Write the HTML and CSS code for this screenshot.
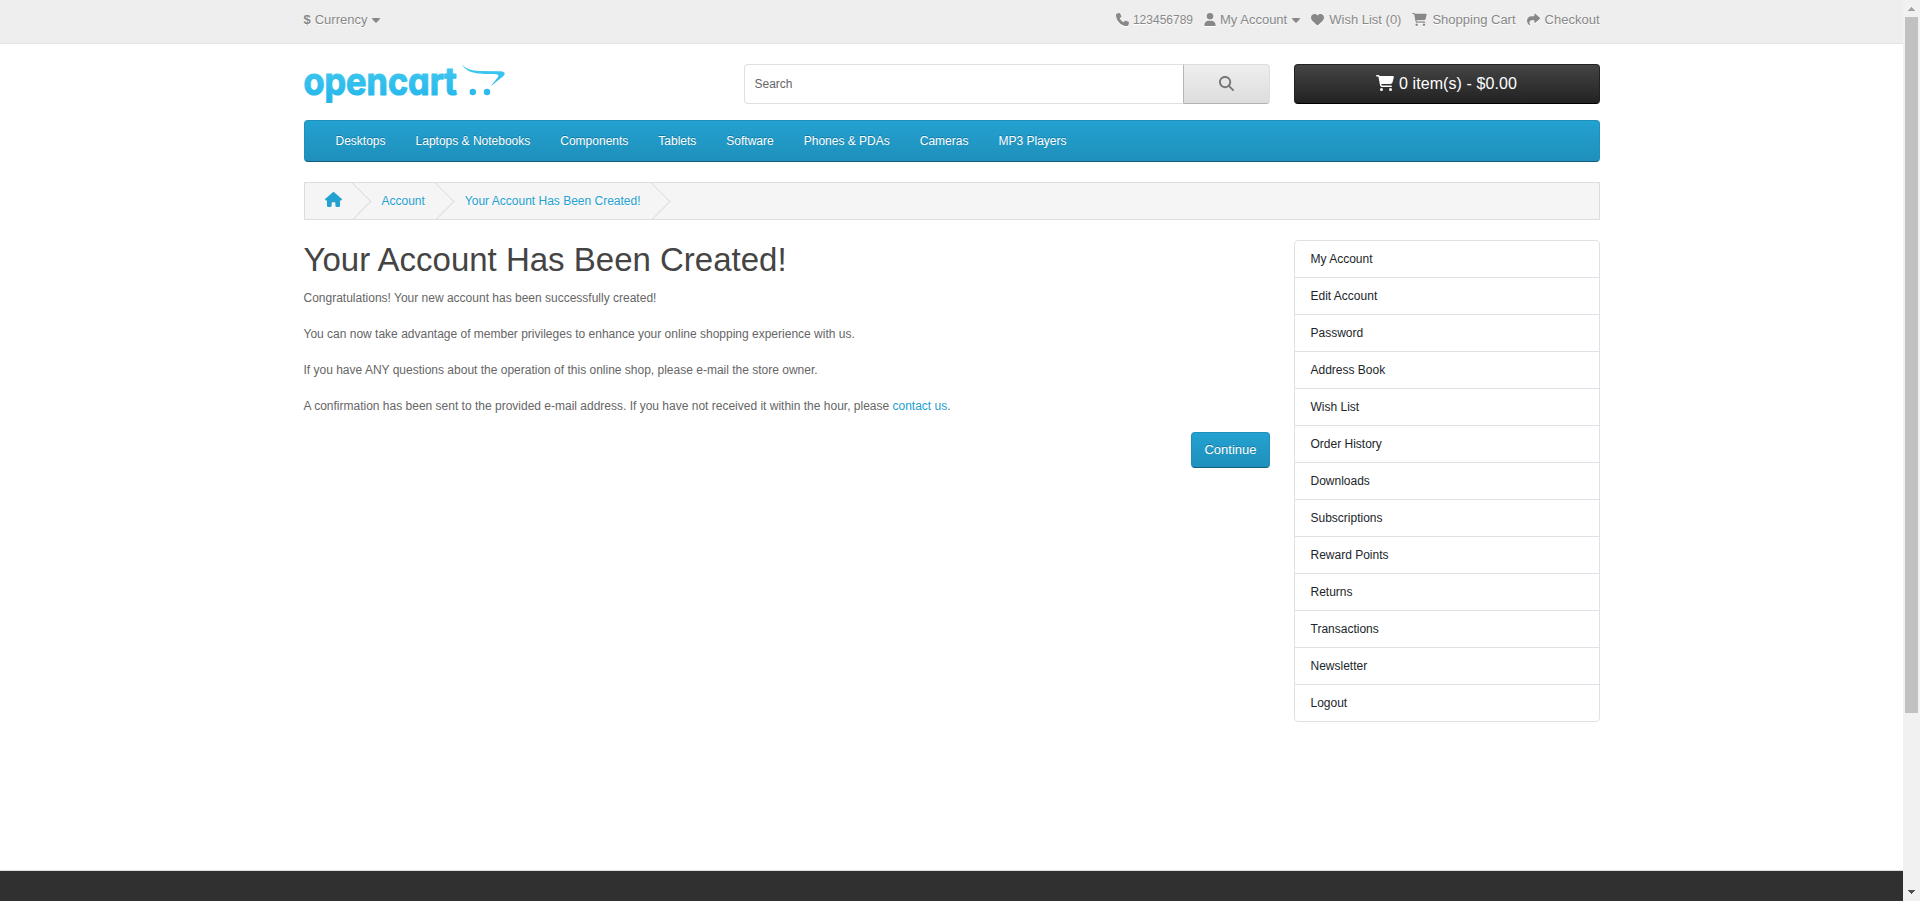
FILE: index.html
```html
<!DOCTYPE html>
<html lang="en">
<head>
<meta charset="utf-8">
<title>Your Account Has Been Created!</title>
<link rel="stylesheet" href="styles.css">
</head>
<body>
<svg class="defs" width="0" height="0">
  <symbol id="caret" viewBox="0 0 320 512"><path d="M137.4 374.6c12.5 12.5 32.8 12.5 45.3 0l128-128c9.2-9.2 11.9-22.9 6.9-34.9s-16.6-19.8-29.6-19.8L32 192c-12.9 0-24.6 7.8-29.6 19.8s-2.2 25.7 6.9 34.9l128 128z"/></symbol>
  <symbol id="cart" viewBox="0 0 576 512"><path d="M0 24C0 10.7 10.7 0 24 0H69.5c22 0 41.5 12.8 50.6 32h411c26.3 0 45.5 25 38.6 50.4l-41 152.3c-8.5 31.4-37 53.3-69.5 53.3H170.7l5.4 28.5c2.2 11.3 12.1 19.5 23.6 19.5H488c13.3 0 24 10.7 24 24s-10.7 24-24 24H199.7c-34.6 0-64.3-24.6-70.7-58.5L77.4 54.5c-.7-3.8-4-6.5-7.9-6.5H24C10.7 48 0 37.3 0 24zM128 464a48 48 0 1 1 96 0 48 48 0 1 1 -96 0zm336-48a48 48 0 1 1 0 96 48 48 0 1 1 0-96z"/></symbol>
</svg>
<div class="window">
<div class="page">
  <nav class="top">
    <div class="container top-row">
      <a class="top-item"><strong>$</strong> <span>Currency</span> <svg class="caret"><use href="#caret"/></svg></a>
      <div class="top-links">
        <a class="top-item"><svg class="icon" viewBox="0 0 512 512"><path d="M164.9 24.6c-7.7-18.6-28-28.5-47.4-23.2l-88 24C12.1 30.2 0 46 0 64C0 311.4 200.6 512 448 512c18 0 33.8-12.1 38.6-29.5l24-88c5.3-19.4-4.6-39.7-23.2-47.4l-96-40c-16.3-6.8-35.2-2.1-46.3 11.6L304.7 368C234.3 334.7 177.3 277.7 144 207.3L193.3 167c13.7-11.2 18.4-30 11.6-46.3l-40-96z"/></svg> <span class="phone">123456789</span></a>
        <a class="top-item"><svg class="icon icon-user" viewBox="0 0 448 512"><path d="M224 256A128 128 0 1 0 224 0a128 128 0 1 0 0 256zm-45.7 48C79.8 304 0 383.8 0 482.3C0 498.7 13.3 512 29.7 512H418.3c16.4 0 29.7-13.3 29.7-29.7C448 383.8 368.2 304 269.7 304H178.3z"/></svg> <span>My Account</span> <svg class="caret"><use href="#caret"/></svg></a>
        <a class="top-item wide"><svg class="icon" viewBox="0 0 512 512"><path d="M47.6 300.4L228.3 469.1c7.5 7 17.4 10.9 27.7 10.9s20.2-3.9 27.7-10.9L464.4 300.4c30.4-28.3 47.6-68 47.6-109.5v-5.8c0-69.9-50.5-129.5-119.4-141C347 36.5 300.6 51.4 268 84L256 96 244 84c-32.6-32.6-79-47.5-124.6-39.9C50.5 55.6 0 115.2 0 185.1v5.8c0 41.5 17.2 81.2 47.6 109.5z"/></svg> <span>Wish List (0)</span></a>
        <a class="top-item wide"><svg class="icon icon-cart"><use href="#cart"/></svg> <span>Shopping Cart</span></a>
        <a class="top-item wide"><svg class="icon" viewBox="0 0 512 512"><path d="M307 34.8c-11.5 5.1-19 16.6-19 29.2v64H176C78.8 128 0 206.8 0 304C0 417.3 81.5 467.9 100.2 478.1c2.5 1.4 5.3 1.9 8.1 1.9c10.9 0 19.7-8.9 19.7-19.7c0-7.5-4.3-14.4-9.8-19.5C108.8 431.9 96 414.4 96 384c0-53 43-96 96-96h96v64c0 12.6 7.4 24.1 19 29.2s25 3 34.4-5.4l160-144c6.7-6.1 10.6-14.7 10.6-23.8s-3.8-17.7-10.6-23.8l-160-144c-9.4-8.5-22.9-10.6-34.4-5.4z"/></svg> <span>Checkout</span></a>
      </div>
    </div>
  </nav>

  <header class="container header">
    <div class="logo">
      <svg class="logo-art" width="202" height="50" viewBox="0 0 202 50">
        <defs>
          <linearGradient id="sky" gradientUnits="userSpaceOnUse" x1="0" y1="2" x2="0" y2="38">
            <stop offset="0" stop-color="#41c8f0"/><stop offset="1" stop-color="#22b6ea"/>
          </linearGradient>
        </defs>
        <text class="wordmark" x="-0.6" y="30.6" textLength="153.500" lengthAdjust="spacingAndGlyphs">opencart</text>
        <path fill="url(#sky)" d="M157.800 .3C162 5 168 6.800 175 7L195 7.200C200.500 7.300 202 9 199.500 12L187 22C190 17.500 194 14 194.300 12C194.500 10.500 193 10.200 190 10.100C178 9.800 163.500 11 157.800 .3Z"/>
        <circle fill="url(#sky)" cx="168.800" cy="28" r="3.200"/><circle fill="url(#sky)" cx="183" cy="28" r="3.200"/>
      </svg>
    </div>
    <div class="search">
      <div class="search-input">Search</div>
      <div class="search-button"><svg class="icon-search" viewBox="0 0 512 512"><path d="M416 208c0 45.9-14.9 88.3-40 122.7L502.6 457.4c12.5 12.5 12.5 32.8 0 45.3s-32.8 12.5-45.3 0L330.7 376c-34.4 25.2-76.8 40-122.7 40C93.1 416 0 322.9 0 208S93.1 0 208 0S416 93.1 416 208zM208 352a144 144 0 1 0 0-288 144 144 0 1 0 0 288z"/></svg></div>
    </div>
    <div class="cart-button"><svg class="cart-icon"><use href="#cart"/></svg><span>0 item(s) - $0.00</span></div>
  </header>

  <div class="container">
    <nav class="menu">
      <a>Desktops</a><a>Laptops &amp; Notebooks</a><a>Components</a><a>Tablets</a><a>Software</a><a>Phones &amp; PDAs</a><a>Cameras</a><a>MP3 Players</a>
    </nav>
    <ul class="breadcrumb">
      <li><svg class="icon-home" viewBox="0 0 576 512"><path d="M575.8 255.5c0 18-15 32.1-32 32.1h-32l.7 160.2c0 2.700-.2 5.400-.5 8.100V472c0 22.100-17.900 40-40 40H456c-1.100 0-2.200 0-3.300-.1c-1.400 .1-2.800 .1-4.200 .1H416 392c-22.100 0-40-17.900-40-40V448 384c0-17.700-14.300-32-32-32H256c-17.700 0-32 14.300-32 32v64 24c0 22.100-17.900 40-40 40H160 128.100c-1.500 0-3-.1-4.500-.2c-1.200 .1-2.400 .2-3.600 .2H104c-22.100 0-40-17.900-40-40V360c0-.9 0-1.900 .1-2.800V287.600H32c-18 0-32-14-32-32.100c0-9 3-17 10-24L266.400 8c7-7 15-8 22-8s15 2 21 7L564.800 231.500c8 7 12 15 11 24z"/></svg></li>
      <li>Account</li>
      <li>Your Account Has Been Created!</li>
    </ul>
  </div>

  <div class="container columns">
    <main class="content">
      <h1>Your Account Has Been Created!</h1>
      <p>Congratulations! Your new account has been successfully created!</p>
      <p>You can now take advantage of member privileges to enhance your online shopping experience with us.</p>
      <p>If you have ANY questions about the operation of this online shop, please e-mail the store owner.</p>
      <p>A confirmation has been sent to the provided e-mail address. If you have not received it within the hour, please <a class="link">contact us</a>.</p>
      <div class="actions"><a class="button">Continue</a></div>
    </main>
    <aside class="side-list">
      <a>My Account</a><a>Edit Account</a><a>Password</a><a>Address Book</a><a>Wish List</a><a>Order History</a><a>Downloads</a><a>Subscriptions</a><a>Reward Points</a><a>Returns</a><a>Transactions</a><a>Newsletter</a><a>Logout</a>
    </aside>
  </div>
  <footer class="footer"></footer>
</div>
<div class="scrollbar">
  <svg width="17" height="17" shape-rendering="crispEdges"><path fill="#a3a3a3" d="M8 7h1v1h1v1h1v1h1v1H5v-1h1V9h1V8h1z"/></svg>
  <div class="thumb"></div>
  <svg class="down" width="17" height="17" shape-rendering="crispEdges"><path fill="#505050" d="M5 6h7v1h-1v1h-1v1H9v1H8V9H7V8H6V7H5z"/></svg>
</div>
</div>
</body>
</html>
```
FILE: styles.css
```css
* { box-sizing: border-box; }
body {
  margin: 0;
  font: 12px/18px "Liberation Sans", Arial, sans-serif;
  color: #666;
  background: #fff;
}
svg { fill: currentColor; flex: none; }
.defs { display: none; }
.window { display: flex; height: 901px; overflow: hidden; }
.page { flex: 1; display: flex; flex-direction: column; }
.container { width: 1320px; margin: 0 auto; padding: 0 12px; }

.top { height: 44px; background: #eee; border-bottom: 1px solid #e2e2e2; }
.top-row {
  display: flex;
  justify-content: space-between;
  padding-top: 10px;
  font-size: 13px;
  line-height: 20px;
  color: #888;
  text-shadow: 0 1px 0 #fff;
}
.top-links { display: flex; gap: 11px; }
.top-item { display: flex; align-items: center; gap: 4px; white-space: nowrap; }
.top-item.wide { gap: 5px; }
.phone { font-size: 12px; }
.icon { width: 13px; height: 13px; margin-bottom: 2px; filter: drop-shadow(0 1px 0 #fff); }
.icon-user { width: 12px; }
.icon-cart { width: 15px; }
.caret { width: 8px; height: 13px; margin: 0 0 2px 1px; }

.header { display: flex; padding-top: 20px; height: 76px; }
.logo { width: 440px; }
.logo-art { display: block; overflow: visible; }
.wordmark {
  font: 700 38px Inter, "Open Sans", sans-serif;
  font-feature-settings: "cv11", "ss03";
  fill: url(#sky);
  stroke: url(#sky);
  stroke-width: 1.2;
  stroke-linejoin: round;
}
.search { display: flex; width: 526px; height: 40px; margin-right: 24px; }
.search-input {
  flex: 1;
  padding: 10px;
  border: 1px solid #dee2e6;
  border-right: 0;
  border-radius: 4px 0 0 4px;
}
.search-button {
  display: flex;
  align-items: center;
  justify-content: center;
  width: 87px;
  color: #777;
  background: linear-gradient(#eee, #ddd);
  border: 1px solid;
  border-color: #ddd #ddd #b3b3b3 #b7b7b7;
  border-radius: 0 4px 4px 0;
}
.icon-search { width: 15px; height: 15px; margin-bottom: 1px; }
.cart-button {
  display: flex;
  align-items: center;
  justify-content: center;
  gap: 5px;
  width: 306px;
  height: 40px;
  font-size: 16px;
  letter-spacing: .09px;
  color: #fff;
  background: linear-gradient(#444, #222);
  border: 1px solid;
  border-color: #222 #222 #000;
  border-radius: 4px;
}
.cart-icon { width: 18px; height: 16px; margin-bottom: 2px; }

.menu {
  display: flex;
  height: 42px;
  padding: 11px 16px 0;
  color: #fff;
  text-shadow: 0 -1px 0 rgba(0, 0, 0, .25);
  background: linear-gradient(#23a1d1, #1f90bb);
  border: 1px solid;
  border-color: #1f90bb #1f90bb #145e7a;
  border-radius: 4px;
}
.menu a { padding: 0 15px; }
.breadcrumb {
  display: flex;
  align-items: center;
  height: 38px;
  margin: 20px 0;
  padding: 0;
  overflow: hidden;
  list-style: none;
  color: #23a1d1;
  text-shadow: 0 1px 0 #fff;
  background: #f5f5f5;
  border: 1px solid #ddd;
}
.breadcrumb li { position: relative; padding: 0 20px; }
.breadcrumb li::after {
  content: "";
  position: absolute;
  top: 50%;
  right: -4px;
  width: 26px;
  height: 26px;
  margin-top: -13px;
  border: 1px solid #ddd;
  border-width: 0 1px 1px 0;
  transform: rotate(-45deg);
}
.breadcrumb li { line-height: 18px; height: 18px; }
.icon-home { display: block; width: 17px; height: 15px; }

.columns { display: flex; gap: 24px; }
.content { width: 966px; }
h1 { margin: 0 0 10px; font-size: 33px; font-weight: 400; line-height: 39px; color: #444; }
p { margin: 0 0 18px; }
.link { color: #23a1d1; }
.actions { display: flex; justify-content: flex-end; margin-top: -1px; }
.button {
  padding: 8px 12px;
  font-size: 13px;
  line-height: 18px;
  font-weight: 500;
  color: #fff;
  text-shadow: 0 -1px 0 rgba(0, 0, 0, .25);
  background: linear-gradient(#23a1d1, #1f90bb);
  border: 1px solid;
  border-color: #1f90bb #1f90bb #145e7a;
  border-radius: 4px;
}
.side-list {
  width: 306px;
  border: 1px solid #dee2e6;
  border-radius: 4px;
  color: #212529;
}
.side-list a { display: block; height: 37px; padding: 9px 16px; }
.side-list a:first-child { height: 36px; }
.side-list a + a { border-top: 1px solid #dee2e6; }
.footer { height: 31px; margin-top: auto; background: #303030; border-top: 1px solid #ddd; }

.scrollbar { display: flex; flex-direction: column; width: 17px; background: #f1f1f1; }
.thumb { height: 696px; margin: 0 2px; background: #c1c1c1; }
.down { margin-top: auto; }
```
